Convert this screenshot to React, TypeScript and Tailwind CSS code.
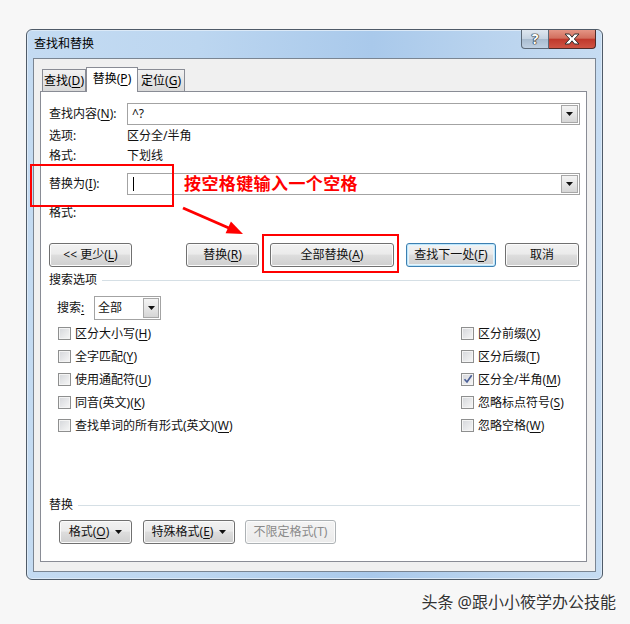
import React from 'react';

const font = "font-['Noto_Sans','Noto_Sans_CJK_SC',sans-serif]";

function Arrow() {
  return (
    <svg width="7" height="4" viewBox="0 0 7 4">
      <path d="M0 0 H7 L3.5 4 Z" fill="#111" />
    </svg>
  );
}

function Mn({ children }: { children: React.ReactNode }) {
  return <span className="underline underline-offset-2">{children}</span>;
}

interface BtnProps {
  children: React.ReactNode;
  className?: string;
  focused?: boolean;
  disabled?: boolean;
}

function Btn({ children, className = '', focused, disabled }: BtnProps) {
  let look =
    'border-[#707070] bg-[linear-gradient(#f2f2f2,#ebebeb_45%,#dddddd_52%,#cfcfcf)] shadow-[inset_0_0_0_1px_#fbfbfb] text-[#111]';
  if (focused)
    look =
      'border-[#3c7fb1] bg-[linear-gradient(#f2f2f2,#ebebeb_45%,#dddddd_52%,#cfcfcf)] shadow-[inset_0_0_0_1px_#bfe6fa,inset_0_0_0_2px_#e6f5fd] text-[#111]';
  if (disabled)
    look = 'border-[#adb2b5] bg-[linear-gradient(#f4f4f4,#ebebeb)] shadow-[inset_0_0_0_1px_#fcfcfc] text-[#8a8a8a]';
  return (
    <div
      className={`flex h-[24px] items-center justify-center gap-[6px] rounded-[3px] border text-[12px] ${look} ${className}`}
    >
      {children}
    </div>
  );
}

function Combo({ value, cursor }: { value?: string; cursor?: boolean }) {
  return (
    <div className="flex h-[22px] flex-1 items-center border border-[#a3a3a3] bg-white">
      <div className="flex flex-1 items-center pl-[4px] text-[12px]">
        {value}
        {cursor && <div className="ml-[1px] h-[14px] w-px bg-black" />}
      </div>
      <div className="mr-px flex h-[18px] w-[17px] items-center justify-center border border-[#a8a8a8] bg-[linear-gradient(#f4f4f4,#e6e6e6_50%,#d6d6d6)]">
        <Arrow />
      </div>
    </div>
  );
}

function Check({ label, checked }: { label: React.ReactNode; checked?: boolean }) {
  return (
    <div className="flex h-[23px] items-center">
      <div className="relative h-[13px] w-[13px] border border-[#8e8f8f] bg-[linear-gradient(135deg,#d4d6da,#f7f7f7)] shadow-[inset_0_0_0_1px_#f4f4f4]">
        {checked && (
          <svg className="absolute left-[1px] top-[0px]" width="10" height="10" viewBox="0 0 10 10">
            <path d="M1.5 5.2 L4 8 L8.7 1.2" fill="none" stroke="#4a5f97" strokeWidth="1.7" />
          </svg>
        )}
      </div>
      <span className="ml-[4px] text-[12px] text-[#111]">{label}</span>
    </div>
  );
}

function Group({ title }: { title: string }) {
  return (
    <div className="flex h-[18px] items-center">
      <span className="text-[12px] text-[#111]">{title}</span>
      <div className="ml-[5px] h-px flex-1 bg-[#d5dfe5]" />
    </div>
  );
}

export default function App() {
  return (
    <div className={`relative h-[624px] w-[630px] overflow-hidden bg-[#f7f7f7] ${font}`}>
      <div className="pl-[26px] pt-[29px]">
        <div className="flex h-[551px] w-[577px] flex-col rounded-[6px] border border-[#4f5b68] bg-[linear-gradient(90deg,#c4dbf2,#bcd6f0_30%,#a9c9eb_60%,#b9d3ee_80%,#c6dcf2)] px-[6px] pb-[6px] shadow-[inset_0_0_0_1px_#dbe9f7]">
          {/* title bar */}
          <div className="flex h-[28px] items-start justify-between">
            <div className="flex h-full items-center pl-[1px] text-[12px] text-[#000]">查找和替换</div>
            <div className="flex">
              <div className="flex h-[19px] w-[28px] items-center justify-center rounded-bl-[4px] border border-t-0 border-[#5c6977] bg-[linear-gradient(#dfe7ef,#c4d2e1_50%,#a9bccf_52%,#bfd0e2)]">
                <span className="text-[14px] font-bold leading-none text-white [text-shadow:0_0_1px_#222,0_0_1px_#222,0_0_1px_#222,0_0_1px_#222]">?</span>
              </div>
              <div className="flex h-[19px] w-[47px] items-center justify-center rounded-br-[4px] border border-l-0 border-t-0 border-[#4e2b29] bg-[linear-gradient(#e49585,#d26f5e_45%,#c0392c_52%,#cf5444)]">
                <svg width="16" height="12" viewBox="0 0 16 12">
                  <path
                    d="M1 1 H5.5 L8 4.2 L10.5 1 H15 L10.3 6 L15 11 H10.5 L8 7.8 L5.5 11 H1 L5.7 6 Z"
                    fill="#fff"
                    stroke="#333"
                    strokeWidth="1"
                  />
                </svg>
              </div>
            </div>
          </div>

          {/* inner box */}
          <div className="flex h-[514px] flex-col border border-[#7a8592] bg-[#f0f0f0] pb-[9px] pl-[6px] pr-[8px] pt-[8px]">
            {/* tabs */}
            <div className="flex h-[24px] items-end pl-[2px]">
              <div className="flex h-[22px] w-[44px] items-center justify-center border border-b-0 border-[#898c95] bg-[linear-gradient(#f2f2f2,#e6e6e6_50%,#d9d9d9)] text-[12px]">
                查找(<Mn>D</Mn>)
              </div>
              <div className="relative z-10 -mb-px flex h-[25px] w-[52px] items-center justify-center border border-b-0 border-[#898c95] bg-white pb-[2px] text-[12px]">
                替换(<Mn>P</Mn>)
              </div>
              <div className="flex h-[22px] w-[47px] items-center justify-center border border-b-0 border-l-0 border-[#898c95] bg-[linear-gradient(#f2f2f2,#e6e6e6_50%,#d9d9d9)] text-[12px]">
                定位(<Mn>G</Mn>)
              </div>
            </div>

            {/* panel */}
            <div className="flex h-[471px] flex-col border border-[#898c95] bg-white pl-[8px] pr-[6px] text-[12px] text-[#111]">
              <div className="mt-[11px] flex items-center">
                <div className="w-[78px]">
                  查找内容(<Mn>N</Mn>):
                </div>
                <Combo value="^?" />
              </div>
              <div className="mt-px flex h-[20px] items-center">
                <div className="w-[78px]">选项:</div>
                <div>区分全/半角</div>
              </div>
              <div className="flex h-[20px] items-center">
                <div className="w-[78px]">格式:</div>
                <div>下划线</div>
              </div>
              <div className="mt-[7px] flex items-center">
                <div className="w-[78px]">
                  替换为(<Mn>I</Mn>):
                </div>
                <Combo cursor />
              </div>
              <div className="mt-[8px] flex h-[20px] items-center">
                <div className="w-[78px]">格式:</div>
              </div>

              <div className="mt-[20px] flex">
                <Btn className="w-[83px]">
                  <span>
                    &lt;&lt; 更少(<Mn>L</Mn>)
                  </span>
                </Btn>
                <Btn className="ml-[54px] w-[73px]">
                  <span>
                    替换(<Mn>R</Mn>)
                  </span>
                </Btn>
                <Btn className="ml-[11px] w-[124px]">
                  <span>
                    全部替换(<Mn>A</Mn>)
                  </span>
                </Btn>
                <Btn focused className="ml-[12px] w-[90px]">
                  <span>
                    查找下一处(<Mn>F</Mn>)
                  </span>
                </Btn>
                <Btn className="ml-[9px] w-[74px]">取消</Btn>
              </div>

              <div className="mt-[4px]">
                <Group title="搜索选项" />
              </div>

              <div className="mt-[7px] flex items-center pl-[8px]">
                <div className="w-[37px]">
                  搜索<Mn>:</Mn>
                </div>
                <div className="flex h-[24px] w-[67px] items-center border border-[#a3a3a3] bg-white">
                  <div className="flex-1 pl-[3px]">全部</div>
                  <div className="mr-px flex h-[20px] w-[16px] items-center justify-center border border-[#a8a8a8] bg-[linear-gradient(#f4f4f4,#e6e6e6_50%,#d6d6d6)]">
                    <Arrow />
                  </div>
                </div>
              </div>

              <div className="mt-[2px] flex pl-[9px]">
                <div className="w-[403px]">
                  <Check label={<>区分大小写(<Mn>H</Mn>)</>} />
                  <Check label={<>全字匹配(<Mn>Y</Mn>)</>} />
                  <Check label={<>使用通配符(<Mn>U</Mn>)</>} />
                  <Check label={<>同音(英文)(<Mn>K</Mn>)</>} />
                  <Check label={<>查找单词的所有形式(英文)(<Mn>W</Mn>)</>} />
                </div>
                <div>
                  <Check label={<>区分前缀(<Mn>X</Mn>)</>} />
                  <Check label={<>区分后缀(<Mn>T</Mn>)</>} />
                  <Check checked label={<>区分全/半角(<Mn>M</Mn>)</>} />
                  <Check label={<>忽略标点符号(<Mn>S</Mn>)</>} />
                  <Check label={<>忽略空格(<Mn>W</Mn>)</>} />
                </div>
              </div>

              <div className="mt-[59px]">
                <Group title="替换" />
              </div>

              <div className="mt-[6px] flex pl-[10px]">
                <Btn className="w-[73px]">
                  <span>
                    格式(<Mn>O</Mn>)
                  </span>
                  <Arrow />
                </Btn>
                <Btn className="ml-[11px] w-[92px]">
                  <span>
                    特殊格式(<Mn>E</Mn>)
                  </span>
                  <Arrow />
                </Btn>
                <Btn disabled className="ml-[10px] w-[91px]">
                  不限定格式(T)
                </Btn>
              </div>
            </div>
          </div>
        </div>
      </div>

      <div className="flex justify-end pr-[14px] pt-[10px]">
        <span className="text-[16px] text-[#333] [text-shadow:0_0_2px_#fff]">头条 @跟小小筱学办公技能</span>
      </div>

      {/* annotations */}
      <div className="absolute left-[30px] top-[164px] h-[43px] w-[144px] border-2 border-[#ff0000]" />
      <div className="absolute left-[262px] top-[234px] h-[39px] w-[137px] border-2 border-[#ff0000]" />
      <div className="absolute left-[184px] top-[173px] text-[17px] font-bold leading-[22px] tracking-[0.4px] text-[#ff0000]">
        按空格键输入一个空格
      </div>
      <svg className="pointer-events-none absolute left-0 top-0" width="630" height="624">
        <line x1="183" y1="208" x2="230" y2="228.5" stroke="#ff0000" strokeWidth="3" />
        <polygon points="243,234 225.6,233.3 230.9,221.5" fill="#ff0000" />
      </svg>
    </div>
  );
}
